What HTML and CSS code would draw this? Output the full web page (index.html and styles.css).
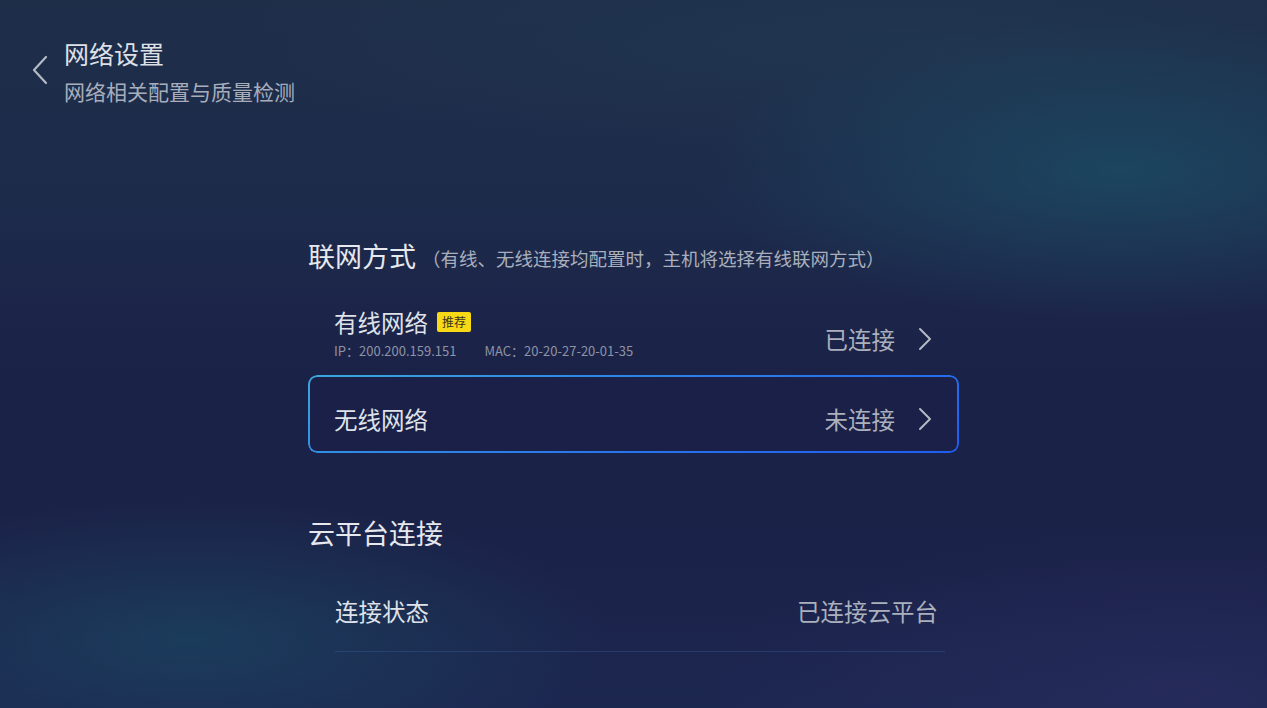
FILE: index.html
```html
<!DOCTYPE html>
<html>
   <head>
      <meta http-equiv="Content-Type" content="text/html;charset=utf-8" />
      <link rel="stylesheet" href="styles.css">
   </head>
   <body>
      <main class="tela">
         <header class="topo">
            <svg class="voltar" width="20" height="30" viewBox="0 0 20 30">
               <polyline points="16,2 4,15 16,28" fill="none" stroke="#b4b9c6" stroke-width="2.2" stroke-linecap="round" stroke-linejoin="round" />
            </svg>
            <div>
               <h1 class="titulo">网络设置</h1>
               <p class="subtitulo">网络相关配置与质量检测</p>
            </div>
         </header>

         <section class="conteudo">
            <h2 class="secao">联网方式<span class="nota">（有线、无线连接均配置时，主机将选择有线联网方式）</span></h2>

            <div class="linha linha-com">
               <div class="esq">
                  <div class="rotulo">有线网络<span class="selo">推荐</span></div>
                  <div class="detalhe"><span>IP：200.200.159.151</span><span>MAC：20-20-27-20-01-35</span></div>
               </div>
               <div class="estado">已连接
                  <svg class="seta" width="16" height="24" viewBox="0 0 16 24">
                     <polyline points="3,2 13,12 3,22" fill="none" stroke="#b4b9c6" stroke-width="2" stroke-linecap="round" stroke-linejoin="round" />
                  </svg>
               </div>
            </div>

            <div class="linha foco">
               <div class="rotulo">无线网络</div>
               <div class="estado">未连接
                  <svg class="seta" width="16" height="24" viewBox="0 0 16 24">
                     <polyline points="3,2 13,12 3,22" fill="none" stroke="#b4b9c6" stroke-width="2" stroke-linecap="round" stroke-linejoin="round" />
                  </svg>
               </div>
            </div>

            <h2 class="secao secao-2">云平台连接</h2>

            <div class="linha linha-fim">
               <div class="rotulo">连接状态</div>
               <div class="estado">已连接云平台</div>
            </div>
         </section>
      </main>
   </body>
</html>
```

FILE: styles.css
```css
body {
   margin: 0;
   font-family: "Noto Sans CJK SC", "Noto Sans", sans-serif;
}

.tela {
   width: 1267px;
   height: 708px;
   overflow: hidden;
   background:
      radial-gradient(ellipse 420px 150px at 1120px 170px, rgba(28, 78, 102, 0.75), transparent),
      radial-gradient(ellipse 700px 120px at 900px 40px, rgba(34, 60, 86, 0.5), transparent),
      radial-gradient(ellipse 420px 140px at 190px 640px, rgba(27, 70, 98, 0.7), transparent),
      radial-gradient(ellipse 480px 160px at 1180px 690px, rgba(46, 46, 100, 0.5), transparent),
      linear-gradient(180deg, #1e2e49 0%, #1d2b4b 28%, #1b2248 52%, #1b2249 80%, #1c2750 100%);
}

.topo {
   display: flex;
   align-items: flex-start;
   padding: 38px 0 0 30px;
}

.voltar {
   margin-top: 17px;
   margin-right: 14px;
}

.titulo {
   margin: 0;
   font-size: 25px;
   font-weight: normal;
   line-height: 30px;
   color: #dde0e7;
}

.subtitulo {
   margin: 9px 0 0;
   font-size: 21px;
   line-height: 28px;
   color: #a7adbb;
}

.conteudo {
   width: 651px;
   margin: 133px 0 0 308px;
}

.secao {
   margin: 0;
   font-size: 27px;
   font-weight: normal;
   line-height: 36px;
   color: #e6e8ee;
}

.nota {
   font-size: 18.5px;
   color: #a9afbc;
   margin-left: 6px;
   vertical-align: 1px;
}

.linha {
   display: flex;
   align-items: center;
   justify-content: space-between;
   height: 78px;
   padding: 0 26px;
   box-sizing: border-box;
}

.linha-com {
   margin-top: 26px;
   height: 73px;
}

.esq {
   display: flex;
   flex-direction: column;
   margin-top: -11px;
}

.rotulo {
   display: flex;
   align-items: center;
   font-size: 23.5px;
   line-height: 30px;
   color: #dfe2e8;
}

.selo {
   margin-left: 9px;
   background: #f8d916;
   color: #3a3520;
   font-size: 12px;
   line-height: 20px;
   padding: 0 5px;
   border-radius: 2px;
}

.detalhe {
   margin-top: 5px;
   font-size: 13px;
   line-height: 18px;
   color: #8d94a5;
   display: flex;
   gap: 28px;
}

.estado {
   display: flex;
   align-items: center;
   font-size: 23.5px;
   color: #abb0bd;
   gap: 22px;
}

.foco {
   position: relative;
   border-radius: 9px;
   background: #1a2047;
   padding-top: 9px;
}

.foco::before {
   content: "";
   position: absolute;
   inset: 0;
   border-radius: 9px;
   padding: 2px;
   background: linear-gradient(160deg, #3aa8dc 0%, #2e86e6 35%, #1f5cf0 100%);
   -webkit-mask: linear-gradient(#000 0 0) content-box, linear-gradient(#000 0 0);
   -webkit-mask-composite: xor;
   mask-composite: exclude;
}

.secao-2 {
   margin-top: 62px;
}

.linha-fim {
   height: 81px;
   margin: 20px 14px 0 27px;
   padding: 0 7px 0 0;
   border-bottom: 1px solid rgba(60, 100, 170, 0.35);
}
```
